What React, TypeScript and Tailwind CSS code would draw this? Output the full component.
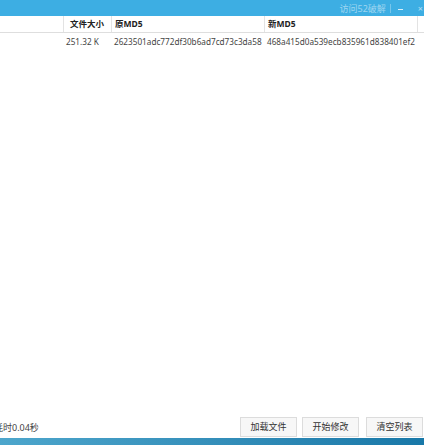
const cols = 'grid grid-cols-[64px_48px_153px_153px_6px]';

export default function App() {
  return (
    <div className="w-[424px] h-[445px] flex flex-col bg-white overflow-hidden font-['Noto_Sans','Noto_Sans_CJK_SC',sans-serif] text-[8.2px] text-[#333]">
      {/* title bar */}
      <div className="h-[16px] bg-[#3daee3] flex items-center justify-end shrink-0">
        <span className="text-[9px] text-white/50 leading-none mr-[4px]">访问52破解</span>
        <span className="w-px h-[9px] bg-white/30 mr-[7px]" />
        <span className="w-[5px] h-px bg-white/80 mr-[15px] mt-[2px]" />
        <span className="text-[9px] text-white/60 leading-none mr-[1px]">×</span>
      </div>

      {/* table header */}
      <div className={`${cols} h-[17px] border-b border-[#dedede] font-bold text-[8.5px] text-[#222] shrink-0`}>
        <div className="border-r border-[#e3e3e3]" />
        <div className="border-r border-[#e3e3e3] flex items-center pl-[6px]">文件大小</div>
        <div className="border-r border-[#e3e3e3] flex items-center pl-[3px]">原MD5</div>
        <div className="border-r border-[#e3e3e3] flex items-center pl-[3px]">新MD5</div>
        <div />
      </div>

      {/* row */}
      <div className={`${cols} h-[18px] items-center text-[#444] shrink-0`}>
        <div />
        <div className="pl-[2px]">251.32 K</div>
        <div className="pl-[2px] whitespace-nowrap">2623501adc772df30b6ad7cd73c3da58</div>
        <div className="pl-[2px] whitespace-nowrap">468a415d0a539ecb835961d838401ef2</div>
        <div />
      </div>

      <div className="flex-1" />

      {/* footer */}
      <div className="flex items-center justify-between h-[21px] mb-[1px] shrink-0">
        <span className="-ml-[6px] text-[9px] text-[#444] mt-[2px]">耗时0.04秒</span>
        <div className="flex gap-[5px] mr-[1px] text-[9px]">
          <button className="w-[57px] h-[20px] border border-[#dcdcdc] bg-[#f7f7f7] text-[#333]">加载文件</button>
          <button className="w-[57px] h-[20px] border border-[#dcdcdc] bg-[#f7f7f7] text-[#333]">开始修改</button>
          <button className="w-[57px] h-[20px] border border-[#dcdcdc] bg-[#f7f7f7] text-[#333] ml-[2px]">清空列表</button>
        </div>
      </div>

      {/* bottom bar */}
      <div className="h-[7px] bg-gradient-to-r from-[#4da6cc] to-[#1878a8] shrink-0" />
    </div>
  );
}
